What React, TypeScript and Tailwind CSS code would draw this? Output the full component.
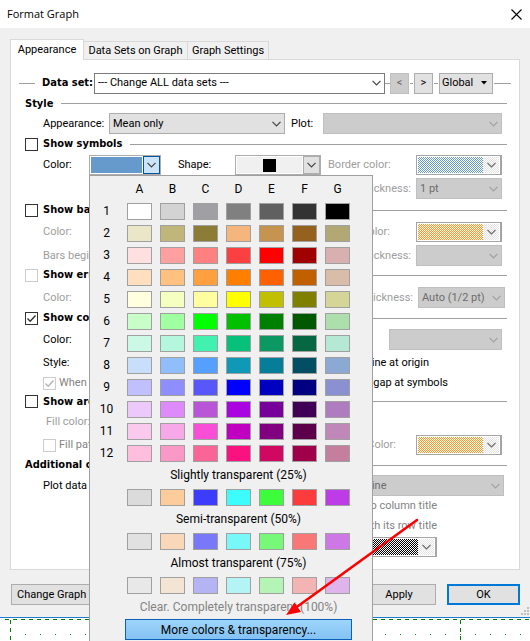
import type { ReactNode } from "react";

const letters = ["A", "B", "C", "D", "E", "F", "G"];

const palette = [
  ["#ffffff", "#d3d3d3", "#a0a0a4", "#808080", "#606060", "#333333", "#000000"],
  ["#ece6c8", "#c0b67a", "#8b7d36", "#f4b67c", "#c5944f", "#94611e", "#b1a874"],
  ["#ffe0e0", "#ffa0a0", "#ff8080", "#fa4040", "#ff0000", "#a00000", "#d8b0b0"],
  ["#ffdfbf", "#ffc080", "#ffa040", "#ff8000", "#ff6000", "#c06000", "#d9bda8"],
  ["#ffffdf", "#f5ffbf", "#ffffa0", "#ffff00", "#c0c000", "#808000", "#d5d598"],
  ["#c8ffc8", "#a0ffa0", "#00ff00", "#00c000", "#008000", "#005800", "#acdfac"],
  ["#ccf8e6", "#b4f6de", "#42f0b0", "#07c07a", "#0b9862", "#056842", "#b6e8d6"],
  ["#c8defa", "#90befa", "#559fff", "#1099b6", "#067e99", "#034e62", "#8ba9d2"],
  ["#c0c0ff", "#8e8eff", "#5858fa", "#0000ff", "#0000c0", "#000080", "#8b90d0"],
  ["#edc8fa", "#de8afa", "#b956d8", "#aa05e0", "#760299", "#400056", "#b07cc0"],
  ["#f9c9ee", "#f7a8e6", "#f94fd6", "#c000c0", "#800080", "#5d004c", "#c088b8"],
  ["#ffbedd", "#fa98c6", "#fa6496", "#fa1280", "#d00862", "#a0004a", "#c47e9e"],
];

const transparent = [
  { label: "Slightly transparent (25%)", colors: ["#dbdbdb", "#fdcc9b", "#3c3cfc", "#3cfcfc", "#3cfc3c", "#fc3c3c", "#be3ce8"] },
  { label: "Semi-transparent (50%)", colors: ["#e1e1e1", "#f8d8b8", "#7878f8", "#78f8f8", "#78f878", "#f87878", "#ce78e8"] },
  { label: "Almost transparent (75%)", colors: ["#e8e8e8", "#f4e4d4", "#b4b4f4", "#b4f4f4", "#b4f4b4", "#f4b4b4", "#dfb4ec"] },
];

const grayed = "border-[#bfbfbf] bg-[#cccccc] text-[#6d6d6d]";

function Chevron({ className = "text-[#444]" }: { className?: string }) {
  return (
    <svg className={className} width="9" height="6" viewBox="0 0 9 6" fill="none" stroke="currentColor" strokeWidth="1.2">
      <path d="M0.5 0.8 4.5 4.8 8.5 0.8" />
    </svg>
  );
}

function Select({ label, value, className, disabled = false, tone }: { label: string; value: string; className: string; disabled?: boolean; tone?: string }) {
  return (
    <span className={`relative flex h-[21px] ${className}`}>
      <select aria-label={label} disabled={disabled} className={`w-full min-w-0 appearance-none border pl-[3px] leading-4 opacity-100 outline-none ${disabled ? grayed : tone ?? "border-[#adadad] bg-[#e1e1e1]"}`}>
        <option>{value}</option>
      </select>
      <span className="pointer-events-none absolute inset-y-0 right-1 flex items-center">
        <Chevron className={disabled ? "text-[#a0a0a0]" : "text-[#444]"} />
      </span>
    </span>
  );
}

function ColorPicker({ label, fill }: { label: string; fill: string }) {
  return (
    <button type="button" aria-label={label} disabled className="flex h-5 w-[86px] shrink-0 border border-[#a5a5a5] border-r-2 bg-white p-px">
      <span className={`h-full flex-1 bg-size-[2px_2px] ${fill}`} />
      <span className="flex h-full w-4 items-center justify-center bg-[repeating-conic-gradient(#e2e2e2_0_25%,#fff_0_50%)] bg-size-[2px_2px]">
        <Chevron className="text-[#666]" />
      </span>
    </button>
  );
}

function Check({ state }: { state: "on" | "off" | "disabled" | "disabled-on" }) {
  const dim = state.startsWith("disabled");
  const on = state.endsWith("on");
  return (
    <span className="relative flex size-[13px] shrink-0">
      <input type="checkbox" defaultChecked={on} disabled={dim} className={`size-full appearance-none border bg-white ${dim ? "border-[#ccc]" : "border-[#333]"}`} />
      {on && (
        <svg className={`pointer-events-none absolute inset-0 ${dim ? "text-[#b5b5b5]" : "text-[#333]"}`} width="13" height="13" viewBox="0 0 13 13" fill="none" stroke="currentColor" strokeWidth="1.4">
          <path d="M2.5 6.5 5.2 9.2 10.5 3.5" />
        </svg>
      )}
    </span>
  );
}

function Header({ title, height, check }: { title: string; height: string; check?: "on" | "off" | "disabled" }) {
  return (
    <div className={`flex items-center ${height}`}>
      <label className="flex items-center gap-[5px] font-['DejaVu_Sans_Condensed','DejaVu_Sans',sans-serif] text-[11px]/4 font-bold whitespace-nowrap">
        {check && <Check state={check} />}
        {title}
      </label>
      <span className="ml-2 h-px flex-1 bg-[#a0a0a0]" />
    </div>
  );
}

function Row({ height, children, className = "" }: { height: string; children: ReactNode; className?: string }) {
  return <div className={`flex items-center pr-[5px] pl-[18px] whitespace-nowrap ${height} ${className}`}>{children}</div>;
}

function Swatch({ color, name }: { color: string; name: string }) {
  return <button type="button" aria-label={name} className="h-[17px] border border-[#a0a0a0]" style={{ backgroundColor: color }} />;
}

function ColorMenu() {
  return (
    <div className="absolute top-[175px] bottom-0 left-[89px] w-[284px] overflow-hidden border border-b-0 border-[#a0a0a0] bg-[#f0f0f0] pt-[5px] pl-1 text-xs/4">
      <div className="grid grid-cols-[repeat(8,25px)] gap-x-2 gap-y-[5px] text-center leading-[17px]">
        <span />
        {letters.map((l) => (
          <span key={l}>{l}</span>
        ))}
        {palette.map((row, r) => [
          <span key={r}>{r + 1}</span>,
          ...row.map((c, i) => <Swatch key={`${r}-${i}`} color={c} name={`${letters[i]}${r + 1}`} />),
        ])}
        {transparent.map((group) => [
          <span key={group.label} className="col-span-7 col-start-2">{group.label}</span>,
          <span key={`${group.label}-pad`} />,
          ...group.colors.map((c, i) => <Swatch key={`${group.label}-${i}`} color={c} name={`${group.label} ${letters[i]}`} />),
        ])}
        <span className="col-span-7 col-start-2 text-[#838383]">Clear. Completely transparent (100%)</span>
      </div>
      <button type="button" className="mt-[3px] ml-[31px] flex h-[21px] w-[227px] items-center justify-center border border-[#0a60b8] bg-linear-to-b from-[#9dd5fb] to-[#84c2f2]">
        More colors &amp; transparency...
      </button>
    </div>
  );
}

export default function App() {
  return (
    <div className="relative h-screen overflow-hidden bg-white font-[Roboto,'Noto_Sans',sans-serif] text-[11px]/4 text-black">
      <header className="flex h-7 items-center justify-between pr-2 pl-[7px]">
        <h1 className="font-['Open_Sans','Noto_Sans',sans-serif]">Format Graph</h1>
        <button type="button" aria-label="Close">
          <svg width="11" height="11" viewBox="0 0 11 11" stroke="#000" strokeWidth="1.1">
            <path d="M0.5 0.5 10.5 10.5M10.5 0.5 0.5 10.5" />
          </svg>
        </button>
      </header>

      <div className="relative border-b border-[#1c7cd0] bg-[#f0f0f0] px-[10px] pt-[11px] pb-3">
        <nav className="flex items-end">
          <button type="button" className="-mb-px h-[21px] w-[74px] border border-b-0 border-[#d9d9d9] bg-white">Appearance</button>
          <button type="button" className="h-[18px] w-[104px] border border-b-0 border-l-0 border-[#d9d9d9] whitespace-nowrap">Data Sets on Graph</button>
          <button type="button" className="h-[18px] w-[81px] border border-b-0 border-l-0 border-[#d9d9d9] whitespace-nowrap">Graph Settings</button>
        </nav>

        <main className="border border-[#d9d9d9] bg-white pt-3 pr-3 pb-[11px] pl-[14px]">
          <div className="-mr-1 -ml-[6px] flex h-[22px] items-center">
            <span className="h-px w-4 bg-[#a0a0a0]" />
            <span className="mr-px ml-[7px] font-['DejaVu_Sans_Condensed','DejaVu_Sans',sans-serif] font-bold">Data set:</span>
            <Select label="Data set" value="--- Change ALL data sets ---" className="flex-1" tone="border-[#7a7a7a] bg-white" />
            <span className="h-px w-[5px] bg-[#a0a0a0]" />
            <button type="button" disabled className={`h-[21px] w-[19px] border ${grayed}`}>&lt;</button>
            <span className="mx-px h-px w-[3px] bg-[#a0a0a0]" />
            <button type="button" className="h-[21px] w-[19px] border border-[#adadad] bg-[#e1e1e1]">&gt;</button>
            <span className="mx-px h-px w-1 bg-[#a0a0a0]" />
            <button type="button" className="flex h-[21px] w-[54px] items-center gap-2 border border-[#adadad] bg-[#e1e1e1] pl-[2px]">
              Global
              <svg width="6" height="4" viewBox="0 0 6 4"><path d="M0 0h6L3 3.5z" /></svg>
            </button>
            <span className="ml-px h-px w-[17px] bg-[#a0a0a0]" />
          </div>

          <Header title="Style" height="h-[19px]" />
          <Row height="h-[21px]">
            <span className="w-[66px]">Appearance:</span>
            <Select label="Appearance" value="Mean only" className="w-[176px]" />
            <span className="ml-[6px] w-8">Plot:</span>
            <Select label="Plot" value="" className="flex-1" disabled />
          </Row>

          <Header title="Show symbols" height="h-5" check="off" />
          <Row height="h-[22px]">
            <span className="w-[46px]">Color:</span>
            <button type="button" aria-label="Symbol color" className="flex h-5 w-[72px] border border-[#adadad] bg-white">
              <span className="m-px h-4 flex-1 bg-[#6699cc]" />
              <span className="flex h-[18px] w-[17px] items-center justify-center border border-[#005499] bg-[#cce4f7]"><Chevron /></span>
            </button>
            <span className="ml-[17px] w-[57px]">Shape:</span>
            <button type="button" aria-label="Symbol shape" className="flex h-5 w-[86px] border border-[#adadad] bg-white">
              <span className="m-px flex h-4 flex-1 items-center justify-center bg-[#f0f0f0]"><span className="size-[13px] bg-black" /></span>
              <span className="flex h-[18px] w-[17px] items-center justify-center border border-[#adadad] bg-[#e1e1e1]"><Chevron /></span>
            </button>
            <span className="ml-auto w-[88px] text-[#9d9d9d]">Border color:</span>
            <ColorPicker label="Border color" fill="bg-[repeating-conic-gradient(#6699cc_0_25%,#fff_0_50%)]" />
          </Row>
          <Row height="h-[25px]" className="justify-end gap-[5px] text-[#9d9d9d]">
            <span>Thickness:</span>
            <Select label="Border thickness" value="1 pt" className="w-[86px]" disabled />
          </Row>

          <Header title="Show bars" height="h-[18px]" check="off" />
          <Row height="h-[26px]" className="text-[#9d9d9d]">
            <span>Color:</span>
            <span className="mr-[26px] ml-auto">Color:</span>
            <ColorPicker label="Bar border color" fill="bg-[repeating-conic-gradient(#ff9922_0_25%,#fff_0_50%)]" />
          </Row>
          <Row height="h-[21px]" className="gap-[5px] text-[#9d9d9d]">
            <span>Bars begin</span>
            <span className="ml-auto">Thickness:</span>
            <Select label="Bar border thickness" value="" className="w-[86px]" disabled />
          </Row>

          <Header title="Show errors" height="h-[18px]" check="disabled" />
          <Row height="h-[27px]" className="gap-[5px] text-[#9d9d9d]">
            <span>Color:</span>
            <span className="ml-auto">Thickness:</span>
            <Select label="Error bar thickness" value="Auto (1/2 pt)" className="-mr-[3px] w-[87px]" disabled />
          </Row>

          <Header title="Show connecting line" height="h-[14px]" check="on" />
          <Row height="h-[29px]">
            <span>Color:</span>
            <Select label="Line thickness" value="" className="ml-auto w-[113px]" disabled />
          </Row>
          <Row height="h-[18px]" className="justify-between">
            <span>Style:</span>
            <span className="mr-[73px]">Line at origin</span>
          </Row>
          <Row height="h-[22px]" className="justify-between">
            <label className="flex items-center gap-[3px] text-[#838383]"><Check state="disabled-on" />When</label>
            <span className="mr-[54px]">gap at symbols</span>
          </Row>

          <Header title="Show area" height="h-[15px]" check="off" />
          <Row height="h-[26px]" className="text-[#9d9d9d]"><span className="pl-[3px]">Fill color:</span></Row>
          <Row height="h-5" className="text-[#838383]">
            <label className="flex items-center gap-[3px]"><Check state="disabled" />Fill pattern</label>
            <span className="mr-5 ml-auto text-[#9d9d9d]">Color:</span>
            <ColorPicker label="Pattern color" fill="bg-[repeating-conic-gradient(#ff9922_0_25%,#fff_0_50%)]" />
          </Row>

          <Header title="Additional options" height="h-5" />
          <Row height="h-[21px]" className="justify-between">
            <span>Plot data on:</span>
            <Select label="Row titles" value="Line" className="-mr-[2px] w-[142px]" disabled />
          </Row>
          <Row height="h-5" className="justify-end text-[#838383]"><span className="mr-[65px]">to column title</span></Row>
          <Row height="h-5" className="justify-end text-[#838383]"><span className="mr-[65px]">with its row title</span></Row>
          <Row height="h-[22px]" className="justify-end">
            <span className="mr-[65px] flex"><ColorPicker label="Label color" fill="bg-[repeating-conic-gradient(#000_0_25%,#fff_0_50%)]" /></span>
          </Row>
        </main>

        <footer className="flex justify-between pt-[14px] pl-px">
          <button type="button" className="h-[21px] w-[116px] border border-[#adadad] bg-[#e1e1e1]">Change Graph Type...</button>
          <span className="flex gap-[11px]">
            <button type="button" className="h-[21px] w-[74px] border border-[#adadad] bg-[#e1e1e1]">Apply</button>
            <button type="button" className="h-[21px] w-[73px] border-2 border-[#0078d7] bg-[#e1e1e1]">OK</button>
          </span>
        </footer>
        <svg className="absolute right-px bottom-[2px]" width="8" height="8" viewBox="0 0 8 8" fill="#bfbfbf">
          <path d="M6 0h2v2H6zM3 3h2v2H3zM6 3h2v2H6zM0 6h2v2H0zM3 6h2v2H3zM6 6h2v2H6z" />
        </svg>
      </div>

      <svg className="block w-full" height="24" fill="none" stroke="#008000">
        <path d="M5 1.5H530" strokeDasharray="4 4" />
        <path d="M10.5 2V24M460.5 2V24" strokeDasharray="4 4" />
        <path d="M25 16.5H530" strokeDasharray="1 14" />
      </svg>

      <ColorMenu />

      <svg className="pointer-events-none absolute top-[515px] left-[280px]" width="145" height="105" viewBox="0 0 145 105">
        <path d="M137 5 14 94" stroke="#f00" strokeWidth="2.6" strokeLinecap="round" />
        <path d="M6 100 14.500 87.500 21 97z" fill="#f00" />
      </svg>
    </div>
  );
}
